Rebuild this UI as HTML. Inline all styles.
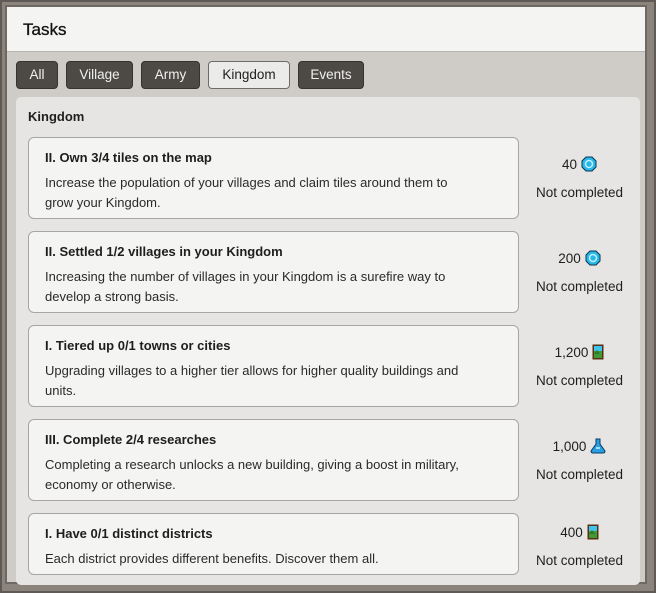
<!DOCTYPE html>
<html><head><style>
*{box-sizing:border-box;margin:0;padding:0}
body{width:656px;height:593px;overflow:hidden;background:#fff;font-family:"Liberation Sans",sans-serif;color:#1e1e1e}
.frame{position:absolute;left:0;top:0;width:656px;height:593px;background:#8a847d;border:2px solid #5f5a55}
.inner{position:absolute;left:5px;top:5px;width:642px;height:579px;background:#cfccc7;border:2px solid #6e6963}
.hdr{position:absolute;left:0;top:0;width:638px;height:45px;background:#f4f4f2;border-bottom:1px solid #b8b5b0}
.hdr span{position:absolute;left:16px;top:13px;font-size:17px;color:#111;-webkit-text-stroke:0.3px #111}
.tab{position:absolute;top:54px;height:28px;border-radius:4px;background:#4d4a45;border:1px solid #36332f;color:#f0f0f0;font-size:13.5px;text-align:center;line-height:26px}
.tab.on{background:#ebebea;color:#1e1e1e;border-color:#6e6b67}
.panel{position:absolute;left:9px;top:90px;width:624px;height:488px;background:#e6e5e3;border-radius:5px}
.ptitle{position:absolute;left:12px;top:12px;font-size:13px;font-weight:bold}
.card{position:absolute;left:12px;width:491px;height:82px;background:#f4f4f2;border:1px solid #a9a6a2;border-radius:6px}
.card b{position:absolute;left:16px;top:12px;font-size:13px}
.card p{position:absolute;left:16px;top:35px;width:430px;font-size:13px;line-height:20px;color:#2a2a2a}
.rew{position:absolute;left:503px;width:121px;text-align:center;font-size:13.5px;line-height:28px}
.ic{display:inline-block;vertical-align:-3px;margin-left:4px}
</style></head><body>
<div class="frame"></div>
<div class="inner">
<div class="hdr"><span>Tasks</span></div>
<div class="tab" style="left:9px;width:42px">All</div>
<div class="tab" style="left:59px;width:67px">Village</div>
<div class="tab" style="left:134px;width:59px">Army</div>
<div class="tab on" style="left:201px;width:82px">Kingdom</div>
<div class="tab" style="left:291px;width:66px">Events</div>
<div class="panel">
<div class="ptitle">Kingdom</div>

<div class="card" style="top:40px"><b>II. Own 3/4 tiles on the map</b><p>Increase the population of your villages and claim tiles around them to grow your Kingdom.</p></div>
<div class="rew" style="top:54px">40<svg class="ic" width="16" height="16" viewBox="0 0 16 16"><polygon points="5,1 11,1 15,5 15,11 11,15 5,15 1,11 1,5" fill="#29b6e8" stroke="#0b3550"/><circle cx="8" cy="8" r="3.5" fill="none" stroke="#bff0ff" stroke-width="1.5"/></svg><br>Not completed</div>

<div class="card" style="top:134px"><b>II. Settled 1/2 villages in your Kingdom</b><p>Increasing the number of villages in your Kingdom is a surefire way to develop a strong basis.</p></div>
<div class="rew" style="top:148px">200<svg class="ic" width="16" height="16" viewBox="0 0 16 16"><polygon points="5,1 11,1 15,5 15,11 11,15 5,15 1,11 1,5" fill="#29b6e8" stroke="#0b3550"/><circle cx="8" cy="8" r="3.5" fill="none" stroke="#bff0ff" stroke-width="1.5"/></svg><br>Not completed</div>

<div class="card" style="top:228px"><b>I. Tiered up 0/1 towns or cities</b><p>Upgrading villages to a higher tier allows for higher quality buildings and units.</p></div>
<div class="rew" style="top:242px">1,200<svg class="ic" width="12" height="16" viewBox="0 0 12 16"><rect x="0.5" y="0.5" width="11" height="15" fill="#5a2e12"/><rect x="2" y="2" width="8" height="5" fill="#3fc4f0"/><rect x="2" y="7" width="8" height="7" fill="#3f9a35"/><polygon points="2,10 5,6 8,10" fill="#2f7a28"/></svg><br>Not completed</div>

<div class="card" style="top:322px"><b>III. Complete 2/4 researches</b><p>Completing a research unlocks a new building, giving a boost in military, economy or otherwise.</p></div>
<div class="rew" style="top:336px">1,000<svg class="ic" width="16" height="16" viewBox="0 0 16 16"><path d="M6 1h4v5l5 7q0 2-2 2H3q-2 0-2-2l5-7z" fill="#2a9ee0" stroke="#0b3a60"/><rect x="6" y="9" width="4" height="2" fill="#9fe0ff"/></svg><br>Not completed</div>

<div class="card" style="top:416px;height:62px"><b>I. Have 0/1 distinct districts</b><p>Each district provides different benefits. Discover them all.</p></div>
<div class="rew" style="top:422px">400<svg class="ic" width="12" height="16" viewBox="0 0 12 16"><rect x="0.5" y="0.5" width="11" height="15" fill="#5a2e12"/><rect x="2" y="2" width="8" height="5" fill="#3fc4f0"/><rect x="2" y="7" width="8" height="7" fill="#3f9a35"/><polygon points="2,10 5,6 8,10" fill="#2f7a28"/></svg><br>Not completed</div>
</div>
</div>
</body></html>
